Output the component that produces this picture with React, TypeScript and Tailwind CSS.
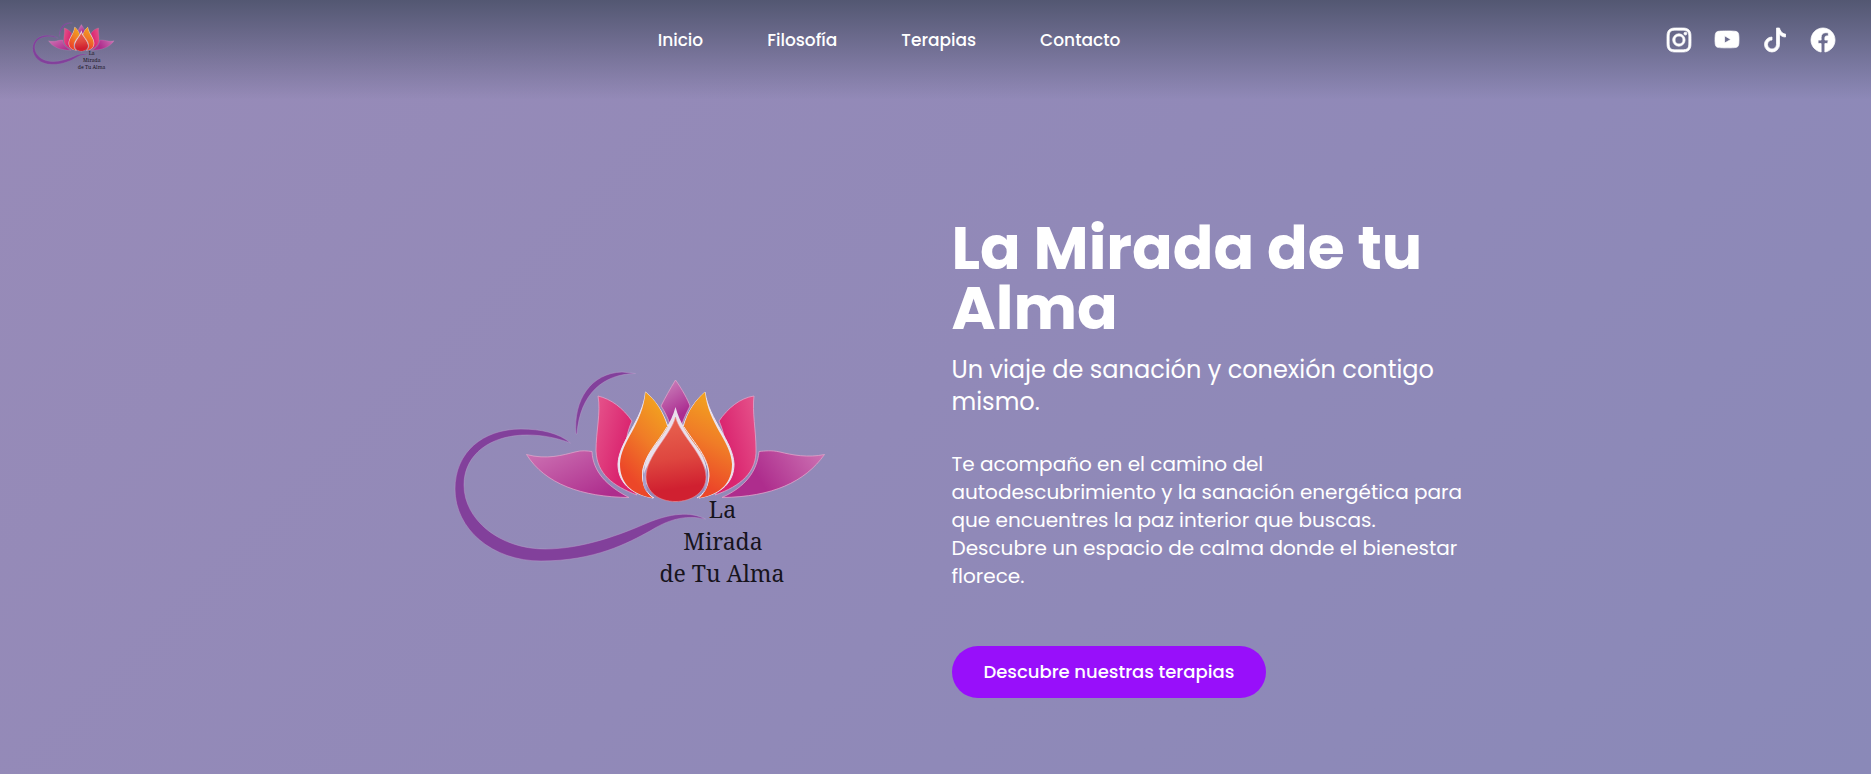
import { BsFacebook, BsInstagram, BsTiktok, BsYoutube } from "react-icons/bs";

const links = [
  { label: "Inicio", href: "#inicio" },
  { label: "Filosofía", href: "#filosofia" },
  { label: "Terapias", href: "#terapias" },
  { label: "Contacto", href: "#contacto" },
];

const socials = [
  { label: "Instagram", Icon: BsInstagram },
  { label: "YouTube", Icon: BsYoutube },
  { label: "TikTok", Icon: BsTiktok },
  { label: "Facebook", Icon: BsFacebook },
];

function Logo({ id, className }: { id: string; className: string }) {
  const fill = (name: string) => `url(#${id}-${name})`;
  return (
    <svg viewBox="452 360 376 236" className={className} role="img" aria-label="La Mirada de Tu Alma">
      <defs>
        <linearGradient id={`${id}-leafL`} x1="0" y1="0" x2="1" y2="0.9">
          <stop offset="0" stopColor="#cd74b4" />
          <stop offset="0.9" stopColor="#ae2d8d" />
        </linearGradient>
        <linearGradient id={`${id}-leafR`} x1="1" y1="0" x2="0" y2="0.3">
          <stop offset="0" stopColor="#cd74b4" />
          <stop offset="0.75" stopColor="#ae2d8d" />
        </linearGradient>
        <linearGradient id={`${id}-pinkL`} x1="0" y1="0.1" x2="0.8" y2="0.6">
          <stop offset="0" stopColor="#e5528a" />
          <stop offset="0.9" stopColor="#da246f" />
        </linearGradient>
        <linearGradient id={`${id}-pinkR`} x1="1" y1="0.1" x2="0.2" y2="0.6">
          <stop offset="0" stopColor="#e5528a" />
          <stop offset="0.9" stopColor="#da246f" />
        </linearGradient>
        <linearGradient id={`${id}-orangeL`} x1="0.7" y1="0" x2="0.3" y2="0.85">
          <stop offset="0" stopColor="#f2a51f" />
          <stop offset="0.5" stopColor="#f07c27" />
          <stop offset="1" stopColor="#ec4729" />
        </linearGradient>
        <linearGradient id={`${id}-orangeR`} x1="0.5" y1="0" x2="0.3" y2="0.85">
          <stop offset="0" stopColor="#f2a51f" />
          <stop offset="0.5" stopColor="#f07c27" />
          <stop offset="1" stopColor="#ec4729" />
        </linearGradient>
        <linearGradient id={`${id}-drop`} x1="0.4" y1="0" x2="0.5" y2="1">
          <stop offset="0" stopColor="#e86450" />
          <stop offset="0.5" stopColor="#de463f" />
          <stop offset="0.85" stopColor="#d02030" />
        </linearGradient>
        <linearGradient id={`${id}-tip`} x1="0.2" y1="0" x2="0.6" y2="1">
          <stop offset="0" stopColor="#cb83bb" />
          <stop offset="0.8" stopColor="#ab2d91" />
        </linearGradient>
      </defs>

      <g fill="#82409b" stroke="#b79bc9" strokeWidth="0.5">
        <path d="M570.500 443C559 433 541 429 521 429C483 429 455 452 455 489C455 529 492 561 541 561C595 561 628 543 650 531C668 520 684 514.500 705.500 519C690 511 670 513.500 647 523C622 534 583 549 545 549C500 549 464 520 464 485C464 454 491 435 527 435C543 435 557 438 570.500 443Z" />
        <path d="M576 434C573 400 591 373 622 372L635.500 373.500C604 374 580 393 577 434Z" />
      </g>

      <g stroke="#dfa3c9" strokeWidth="0.8">
        <path d="M526.500 454.500C547 460 563 455 575 452C582 450 587 451 592 451.500C593 472 607 486 629 497.500C582 497 545 484 526.500 454.500Z" fill={fill("leafL")} />
        <path d="M824.500 454.500C808 458 792 455 780 452C771 450 765 451 759 451.500C757 472 745 487 722 497.500C772 497 805 482 824.500 454.500Z" fill={fill("leafR")} />
        <path d="M598 396C611 399 623 408 632 421C623 440 624 465 630 480C633 488 634 491 637 495C613 486 597 474 596 451C596 431 601 412 598 396Z" fill={fill("pinkL")} />
        <path d="M754 396C740 398 728 408 719 421C728 440 727 465 722 480C720 487 718 491 715 495C741 486 757 472 756 449C756 430 752 412 754 396Z" fill={fill("pinkR")} />
        <path d="M675.500 380C682 389 688 400 690 406C687 412 684 418 681 427H671C668 418 665 412 661 406C665 398 670 389 675.500 380Z" fill={fill("tip")} />
      </g>

      <path d="M645.500 392C655 400 663 411 668 427C660 442 643 455 642 474C642 484 646 493 653 498C630 494 618 482 618 464C619 441 643 420 645.500 392Z" fill="#ece4f0" stroke="#ece4f0" strokeWidth="1" />
      <path d="M705 392C696 400 688 410 683 427C691 442 708 456 709 474C709 484 706 492 699 498C722 494 734 482 734 464C733 441 709 420 705 392Z" fill="#ece4f0" stroke="#ece4f0" strokeWidth="1" />
      <path d="M675.500 407C680 424 688 433 697 447C715 472 708 498 675.500 501.500C643 498 636 472 653 447C662 433 671 424 675.500 407Z" fill="#e9dfeb" />
      <path d="M645.500 392C655 400 663 411 667.500 427C660 442 643 455 642 474C642 484 646 493 653 498C630 494 620 482 620 464C621 441 643 424 645.500 392Z" fill={fill("orangeL")} />
      <path d="M705 392C696 400 688 410 683.500 427C691 442 708 456 709 474C709 484 706 492 699 498C722 494 732 482 732 464C731 441 708 424 705 392Z" fill={fill("orangeR")} />
      <path d="M667 427C658 443 643 455 642.500 476C643 487 647 494 654 498M684 427C694 443 709 457 709 476C708 487 704 494 697 498" fill="none" stroke="#f0e5ee" strokeWidth="1" />
      <path d="M648 465C640 478 643 489 648 493C645 484 645 476 648 465ZM704 465C710 478 708 489 703 493C706 484 706 476 704 465Z" fill="#aaa0cb" />
      <path d="M675.500 417C679 434 706 456 706 477C706 492 692 501.500 675.500 501.500C659 501.500 646 492 646 477C646 456 672 434 675.500 417Z" fill={fill("drop")} stroke="#e98d93" strokeWidth="0.6" />

      <g fill="#17141c" fontFamily="'Noto Serif', 'DejaVu Serif', 'Liberation Serif', serif" fontSize="23" textAnchor="middle">
        <text x="722.500" y="518">La</text>
        <text x="723" y="550">Mirada</text>
        <text x="722" y="582">de Tu Alma</text>
      </g>
    </svg>
  );
}

export default function App() {
  return (
    <div className="min-h-screen bg-linear-135 from-[#988bb8] via-[#9189b8] to-[#8a89b8] font-['Poppins','Inter',sans-serif] text-white">
      <header className="flex h-25 items-start justify-between bg-linear-to-b from-[#535772] to-transparent px-8 pt-5">
        <a href="#inicio">
          <Logo id="brand" className="h-[52px] w-[83px]" />
        </a>
        <nav className="flex h-[42px] items-center gap-16 text-[17px] font-medium">
          {links.map(({ label, href }) => (
            <a key={label} href={href}>{label}</a>
          ))}
        </nav>
        <div className="flex h-10 items-center gap-4">
          {socials.map(({ label, Icon }) => (
            <a key={label} href={`#${label.toLowerCase()}`} aria-label={label} className="p-1">
              <Icon className="size-6 overflow-visible stroke-white stroke-[0.5px]" />
            </a>
          ))}
        </div>
      </header>

      <main className="mx-auto grid max-w-[1056px] grid-cols-2 items-center gap-8 pt-[118px] pb-[76px]">
        <Logo id="hero" className="mt-10 ml-11 h-[236px] w-[376px]" />
        <section>
          <h1 className="text-6xl leading-none font-bold">La Mirada de tu<br />Alma</h1>
          <p className="mt-4 text-2xl leading-8">Un viaje de sanación y conexión contigo<br />mismo.</p>
          <p className="mt-8 text-xl leading-7">
            Te acompaño en el camino del<br />
            autodescubrimiento y la sanación energética para<br />
            que encuentres la paz interior que buscas.<br />
            Descubre un espacio de calma donde el bienestar<br />
            florece.
          </p>
          <button type="button" className="mt-14 h-13 rounded-full bg-[#980ffa] px-8 text-lg font-medium">
            Descubre nuestras terapias
          </button>
        </section>
      </main>
    </div>
  );
}
